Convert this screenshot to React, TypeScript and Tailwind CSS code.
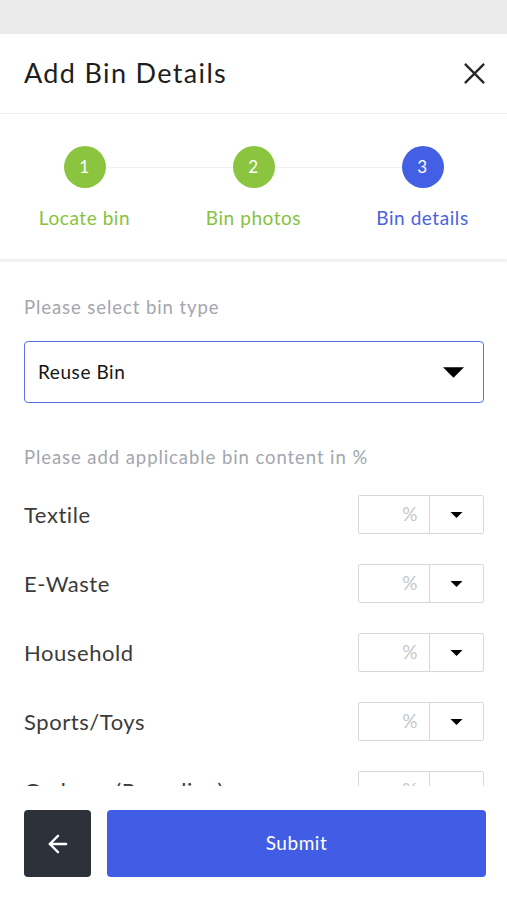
import { ArrowLeft } from "lucide-react";

const steps = [
  { n: 1, label: "Locate bin", done: true },
  { n: 2, label: "Bin photos", done: true },
  { n: 3, label: "Bin details", done: false },
];

const contents = ["Textile", "E-Waste", "Household", "Sports/Toys", "Garbage (Recycling)"];

function Caret({ className }: { className?: string }) {
  return (
    <svg viewBox="0 0 20 10" className={className} fill="currentColor">
      <path d="M0 0 L20 0 L10 10 Z" />
    </svg>
  );
}

function PercentBox() {
  return (
    <div className="flex h-[39px] w-[126px] shrink-0 border border-[#d6d8dc] rounded-[2px]">
      <div className="flex w-[71px] items-center justify-end border-r border-[#d6d8dc] pr-[11px] text-[19px] text-[#c4c7cc]">
        %
      </div>
      <div className="flex flex-1 items-center justify-center">
        <Caret className="h-[6px] w-[13px] text-black" />
      </div>
    </div>
  );
}

export default function App() {
  return (
    <div className="flex h-[900px] w-full flex-col bg-white font-['Lato',sans-serif] tracking-[0.035em]">
      <div className="h-[34px] bg-[#ebebeb]" />

      {/* Header */}
      <div className="flex h-[80px] items-center justify-between border-b border-[#ececec] pl-6 pr-[21px]">
        <h1 className="text-[27px] font-normal tracking-[0.05em] text-[#1e1e1e]">Add Bin Details</h1>
        <svg viewBox="0 0 24 24" className="h-[23px] w-[23px] text-[#262626]" fill="none" stroke="currentColor" strokeWidth="2.4">
          <path d="M2 2 L22 22 M22 2 L2 22" />
        </svg>
      </div>

      {/* Stepper */}
      <div className="relative grid h-[146px] grid-cols-3 shadow-[0_2px_2px_rgba(0,0,0,0.06)] border-b border-[#efefef]">
        <div className="absolute left-[84px] right-[84px] top-[53px] h-px bg-[#f0f0f0]" />
        {steps.map((s) => (
          <div key={s.n} className="relative flex flex-col items-center pt-[32px]">
            <div
              className={`flex h-[42px] w-[42px] items-center justify-center rounded-full text-[17px] text-white ${
                s.done ? "bg-[#8bc53f]" : "bg-[#4360e4]"
              }`}
            >
              {s.n}
            </div>
            <div className={`mt-[16px] text-[19px] ${s.done ? "text-[#86c240]" : "text-[#4a63df]"}`}>
              {s.label}
            </div>
          </div>
        ))}
      </div>

      {/* Form */}
      <div className="flex-1 overflow-hidden pl-6 pr-[23px] pt-[35px]">
        <div className="text-[18.5px] leading-[24px] tracking-[0.05em] text-[#a3a6ad]">Please select bin type</div>
        <div className="mt-[22px] flex h-[62px] items-center justify-between rounded-[4px] border-[1.5px] border-[#5a72e6] pl-[13px] pr-[19px]">
          <span className="text-[19px] text-[#151515]">Reuse Bin</span>
          <Caret className="h-[11px] w-[21px] text-black" />
        </div>
        <div className="mt-[42px] text-[18.5px] leading-[24px] tracking-[0.05em] text-[#a3a6ad]">
          Please add applicable bin content in %
        </div>
        <div className="mt-[26px] flex flex-col gap-[30px]">
          {contents.map((c) => (
            <div key={c} className="flex items-center justify-between">
              <span className="text-[22px] text-[#3b3b3b]">{c}</span>
              <PercentBox />
            </div>
          ))}
        </div>
      </div>

      {/* Footer */}
      <div className="flex h-[114px] gap-4 bg-white pl-6 pr-[21px] pt-6">
        <button className="flex h-[67px] w-[67px] items-center justify-center rounded-[4px] bg-[#2d3139] text-white">
          <ArrowLeft size={28} strokeWidth={2} />
        </button>
        <button className="flex h-[67px] flex-1 items-center justify-center rounded-[4px] bg-[#425de5] text-[19px] text-white">
          Submit
        </button>
      </div>
    </div>
  );
}
